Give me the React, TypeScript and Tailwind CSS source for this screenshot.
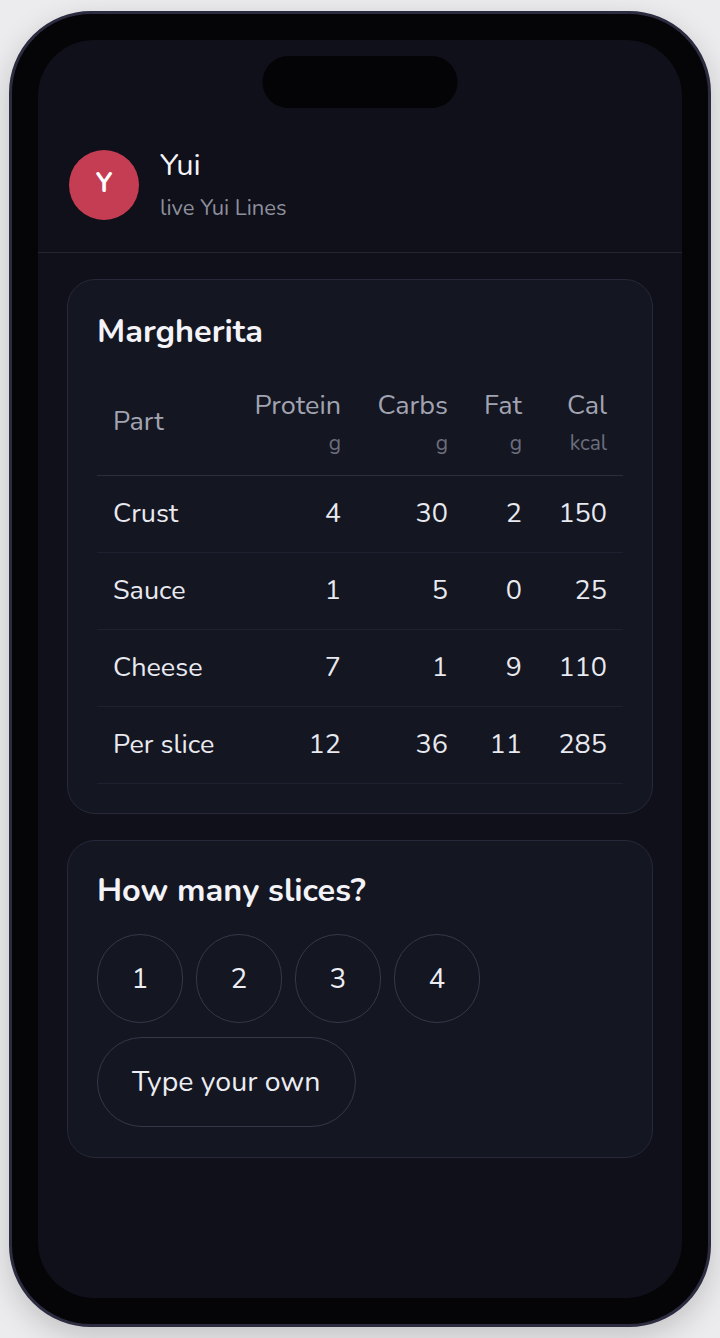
import React from "react";

const rows = [
  { part: "Crust", protein: 4, carbs: 30, fat: 2, cal: 150 },
  { part: "Sauce", protein: 1, carbs: 5, fat: 0, cal: 25 },
  { part: "Cheese", protein: 7, carbs: 1, fat: 9, cal: 110 },
  { part: "Per slice", protein: 12, carbs: 36, fat: 11, cal: 285 },
];

const cols = [
  { label: "Protein", unit: "g", w: "w-[120px]" },
  { label: "Carbs", unit: "g", w: "w-[107px]" },
  { label: "Fat", unit: "g", w: "w-[74px]" },
  { label: "Cal", unit: "kcal", w: "w-[85px]" },
];

function NutritionCard() {
  return (
    <section className="rounded-[28px] border border-[#27293a] bg-[#141622] px-[29px] pt-[33px] pb-[29px]">
      <h2 className="text-[32.5px] font-bold leading-[36px] text-[#f3f3f8]">Margherita</h2>
      <table className="mt-[40px] w-full table-fixed border-collapse">
        <colgroup>
          <col />
          {cols.map((c) => (
            <col key={c.label} className={c.w} />
          ))}
        </colgroup>
        <thead>
          <tr className="border-b border-[#2b2d3c]">
            <th className="px-4 pb-[19px] text-left align-middle text-[27px] font-normal text-[#a2a4b2]">Part</th>
            {cols.map((c) => (
              <th key={c.label} className="px-4 pb-[19px] text-right font-normal">
                <div className="text-[27px] leading-[34px] text-[#a2a4b2]">{c.label}</div>
                <div className="mt-[7px] text-[21px] leading-[26px] text-[#6c6e7d]">{c.unit}</div>
              </th>
            ))}
          </tr>
        </thead>
        <tbody>
          {rows.map((r) => (
            <tr key={r.part} className="h-[77px] border-b border-[#1f2130]">
              <td className="px-4 text-[27px] text-[#e9e9f0]">{r.part}</td>
              <td className="px-4 text-right text-[27px] text-[#e9e9f0]">{r.protein}</td>
              <td className="px-4 text-right text-[27px] text-[#e9e9f0]">{r.carbs}</td>
              <td className="px-4 text-right text-[27px] text-[#e9e9f0]">{r.fat}</td>
              <td className="px-4 text-right text-[27px] text-[#e9e9f0]">{r.cal}</td>
            </tr>
          ))}
        </tbody>
      </table>
    </section>
  );
}

function SlicesCard() {
  return (
    <section className="rounded-[28px] border border-[#27293a] bg-[#141622] px-[29px] pt-[31px] pb-[30px]">
      <h2 className="text-[32.5px] font-bold leading-[36px] text-[#f3f3f8]">How many slices?</h2>
      <div className="mt-[26px] flex flex-wrap gap-[13px]">
        {[1, 2, 3, 4].map((n) => (
          <button
            key={n}
            className="flex h-[89px] w-[86px] items-center justify-center rounded-full border-[1.5px] border-[#363849] text-[28px] text-[#ecedf3]"
          >
            {n}
          </button>
        ))}
      </div>
      <div className="mt-[14px] flex">
        <button className="flex h-[90px] items-center rounded-full border-[1.5px] border-[#363849] px-[34px] text-[28.5px] text-[#ecedf3]">
          Type your own
        </button>
      </div>
    </section>
  );
}

export default function App() {
  return (
    <div
      className="flex h-[1338px] w-[720px] items-start justify-center bg-[#ececee] pt-[11px]"
      style={{ fontFamily: "Nunito, Lato, 'Noto Sans', sans-serif" }}
    >
      <div className="h-[1316px] w-[702px] rounded-[82px] border-[3px] border-[#2c2c40] bg-[#050508] p-[26px] shadow-[0_10px_30px_rgba(0,0,0,0.18)]">
        <div className="relative flex h-full flex-col overflow-hidden rounded-[56px] bg-[#0f1019]">
          <div className="absolute left-1/2 top-[16px] h-[52px] w-[195px] -translate-x-1/2 rounded-full bg-[#040407]" />
          <header className="flex items-center gap-[21px] border-b border-[#232531] px-[31px] pt-[107px] pb-[30px]">
            <div className="flex h-[70px] w-[70px] items-center justify-center rounded-full bg-[#c53d52] text-[27px] font-bold text-white">
              Y
            </div>
            <div className="flex flex-col">
              <span className="text-[31px] leading-[36px] text-[#f3f3f8]">Yui</span>
              <span className="mt-[11px] text-[22px] leading-[28px] text-[#8d8f9c]">live Yui Lines</span>
            </div>
          </header>
          <main className="flex flex-col gap-[26px] px-[29px] pt-[26px]">
            <NutritionCard />
            <SlicesCard />
          </main>
        </div>
      </div>
    </div>
  );
}
